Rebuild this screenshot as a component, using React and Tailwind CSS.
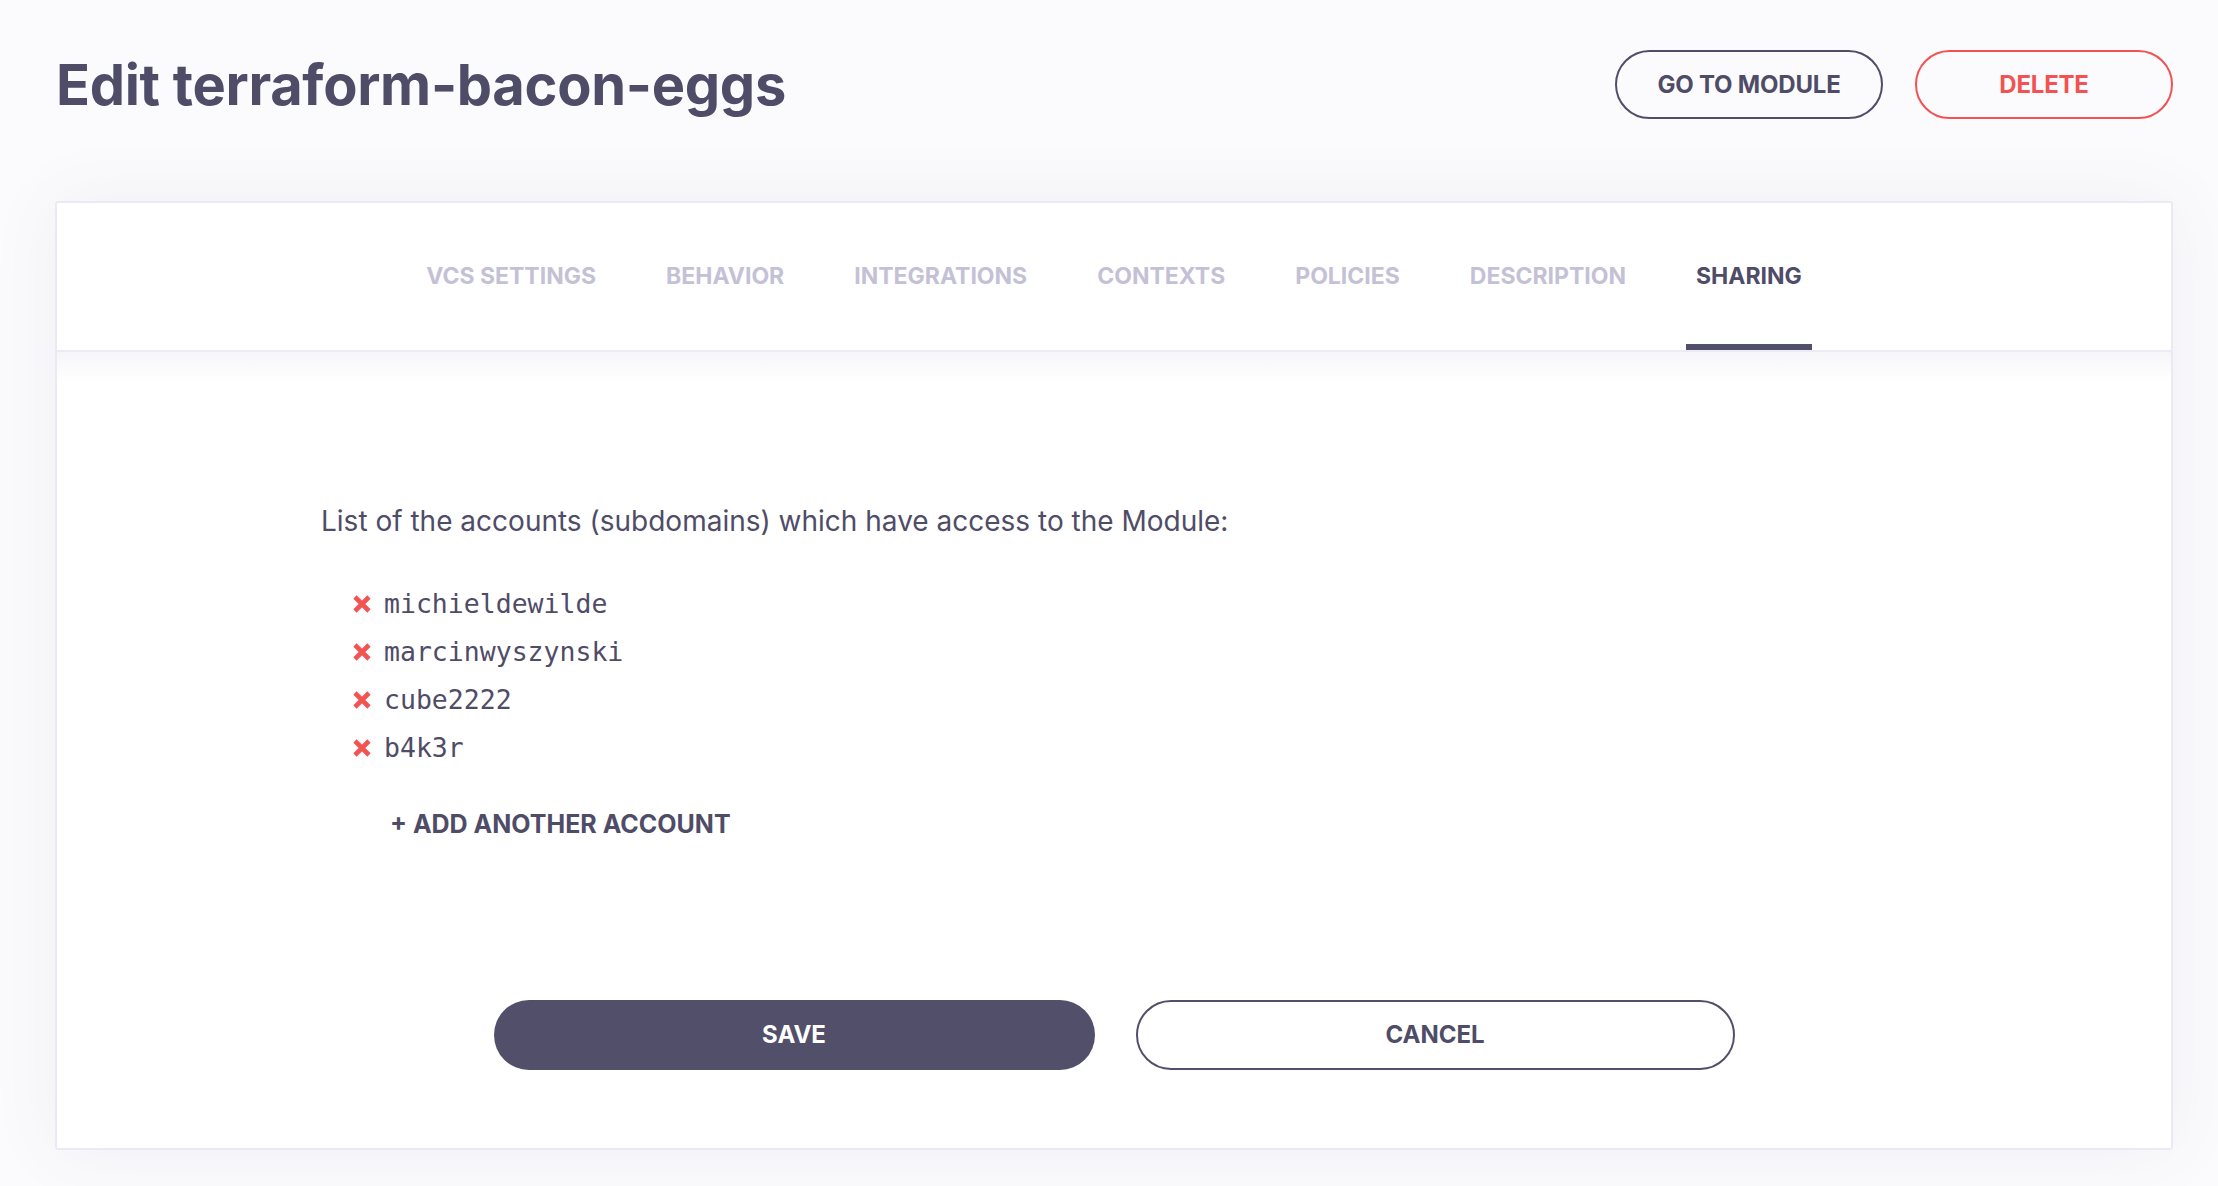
import React from "react";

const tabs = ["VCS SETTINGS", "BEHAVIOR", "INTEGRATIONS", "CONTEXTS", "POLICIES", "DESCRIPTION", "SHARING"];
const accounts = ["michieldewilde", "marcinwyszynski", "cube2222", "b4k3r"];

function RedX() {
  return (
    <svg width="20" height="18" viewBox="0 0 20 18" className="shrink-0">
      <path d="M3 2 L17 16 M17 2 L3 16" stroke="#f35353" strokeWidth="4.6" strokeLinecap="butt" fill="none" />
    </svg>
  );
}

export default function App() {
  return (
    <div
      className="h-[1186px] overflow-hidden w-full bg-[#fbfbfd] pt-[50px] pl-[55px] pr-[45px] text-[#4f4c68]"
      style={{ fontFamily: "Inter, 'Noto Sans', sans-serif" }}
    >
      <div className="flex h-[69px] items-center justify-between">
        <h1 className="text-[56px] font-bold tracking-[-0.3px] text-[#4f4c68] leading-none pl-[1px]">
          Edit terraform-bacon-eggs
        </h1>
        <div className="flex gap-[32px]">
          <button className="h-[69px] w-[268px] rounded-full border-2 border-[#504d68] text-[24px] font-bold text-[#4f4c68] tracking-[-0.2px]">
            GO TO MODULE
          </button>
          <button className="h-[69px] w-[258px] rounded-full border-2 border-[#f25252] text-[24px] font-bold text-[#f25252] tracking-[-0.2px]">
            DELETE
          </button>
        </div>
      </div>

      <div className="mt-[82px] rounded-[3px] border-2 border-[#ebe9f2] bg-white shadow-[0_0_70px_rgba(90,85,140,0.07)]">
        <div className="flex h-[149px] justify-center gap-[50px] border-b-2 border-[#eceaf4]">
          {tabs.map((t) => {
            const active = t === "SHARING";
            return (
              <div
                key={t}
                className={`relative flex items-center px-[10px] text-[23px] font-bold ${
                  active ? "text-[#4f4c68]" : "text-[#c4c1d6]"
                }`}
              >
                {t}
                {active && <div className="absolute bottom-0 left-0 right-0 h-[6px] bg-[#524f6b]" />}
              </div>
            );
          })}
        </div>
        <div className="bg-gradient-to-b from-[#f6f6f9] to-white h-[30px]" />
        <div className="px-[264px] pt-[121px] pb-[78px]">
          <p className="text-[28px] leading-[36px] text-[#4f4c68]">
            List of the accounts (subdomains) which have access to the Module:
          </p>
          <ul className="mt-[41px] pl-[31px]">
            {accounts.map((a) => (
              <li key={a} className="flex h-[48px] items-center gap-[12px]">
                <RedX />
                <span
                  className="text-[26.5px] text-[#4f4c68]"
                  style={{ fontFamily: "'DejaVu Sans Mono', 'Liberation Mono', monospace" }}
                >
                  {a}
                </span>
              </li>
            ))}
          </ul>
          <div className="mt-[35px] flex h-[36px] items-center pl-[69px] text-[25px] font-bold text-[#4f4c68]">
            + ADD ANOTHER ACCOUNT
          </div>
          <div className="mt-[157px] flex justify-center gap-[41px]">
            <button className="h-[70px] w-[601px] rounded-full bg-[#524f6b] text-[24px] font-bold text-white">
              SAVE
            </button>
            <button className="h-[70px] w-[599px] rounded-full border-2 border-[#524f6b] bg-white text-[24px] font-bold text-[#4f4c68]">
              CANCEL
            </button>
          </div>
        </div>
      </div>
    </div>
  );
}
